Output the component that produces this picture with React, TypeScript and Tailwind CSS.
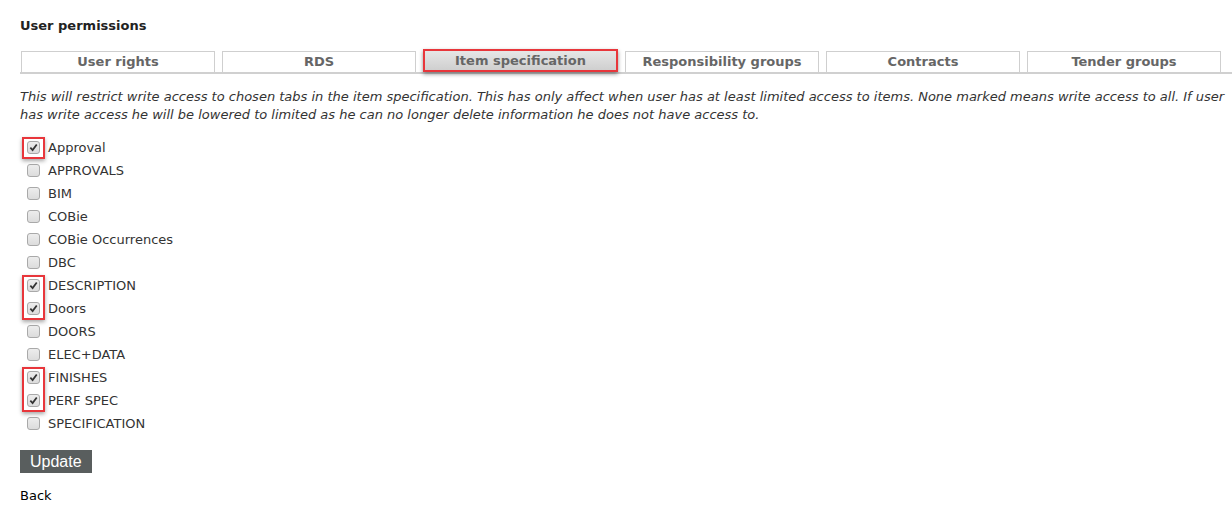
const TABS = ['User rights', 'RDS', 'Item specification', 'Responsibility groups', 'Contracts', 'Tender groups']

const ITEMS = [
  { label: 'Approval', checked: true },
  { label: 'APPROVALS', checked: false },
  { label: 'BIM', checked: false },
  { label: 'COBie', checked: false },
  { label: 'COBie Occurrences', checked: false },
  { label: 'DBC', checked: false },
  { label: 'DESCRIPTION', checked: true },
  { label: 'Doors', checked: true },
  { label: 'DOORS', checked: false },
  { label: 'ELEC+DATA', checked: false },
  { label: 'FINISHES', checked: true },
  { label: 'PERF SPEC', checked: true },
  { label: 'SPECIFICATION', checked: false },
]

// red annotation boxes laid over the checkboxes: first row, row count
const MARKS = [
  { row: 0, count: 1 },
  { row: 6, count: 2 },
  { row: 10, count: 2 },
]

const ROW = 23

function Box({ checked }: { checked: boolean }) {
  return (
    <span className="w-[13px] h-[13px] rounded-[3px] border border-[#a9a9a9] bg-gradient-to-b from-[#ededed] to-[#dcdcdc] flex items-center justify-center">
      {checked && (
        <svg width="9" height="9" viewBox="0 0 10 10">
          <path d="M1.5 5.2 L4 7.8 L8.6 1.6" fill="none" stroke="#333" strokeWidth="2" />
        </svg>
      )}
    </span>
  )
}

export default function App() {
  return (
    <div className="w-[1232px] h-[518px] overflow-hidden bg-white font-['DejaVu_Sans',Verdana,sans-serif] text-[13px] text-[#333]">
      <div className="w-[1250px] pl-5">
        <h1 className="pt-[18px] font-bold text-[13px] leading-4 text-[#222]">User permissions</h1>

        {/* tabs */}
        <div className="mt-[17px] flex gap-[7px] border-b-2 border-[#d0d0d0] pl-px">
          {TABS.map((t) =>
            t === 'Item specification' ? (
              <div
                key={t}
                className="w-[195px] h-[23px] -mt-[2px] -mb-[2px] border-2 border-[#e8363b] shadow-[0_2px_4px_rgba(0,0,0,0.45)] bg-gradient-to-b from-[#e6e6e6] to-[#cfcfcf] flex items-center justify-center pt-px font-bold text-[#666] leading-4"
              >
                {t}
              </div>
            ) : (
              <div
                key={t}
                className="w-[194px] h-[21px] border border-b-0 border-[#cfcfcf] flex items-center justify-center font-bold text-[#666] leading-4"
              >
                {t}
              </div>
            )
          )}
        </div>

        <p className="mt-[14px] italic leading-[18px] text-[#333] w-[1215px]">
          This will restrict write access to chosen tabs in the item specification. This has only affect when user has at least limited access to items. None marked means write access to all. If user has write access he will be lowered to limited as he can no longer delete information he does not have access to.
        </p>

        {/* list */}
        <div className="relative mt-[12px]">
          {ITEMS.map((it) => (
            <div key={it.label} className="h-[23px] flex items-center">
              <span className="ml-[7px]">
                <Box checked={it.checked} />
              </span>
              <span className="ml-[8px] leading-4">{it.label}</span>
            </div>
          ))}
          {MARKS.map((m) => (
            <div
              key={m.row}
              className="absolute left-[2px] w-[23px] border-2 border-[#e8363b] shadow-[0_2px_4px_rgba(0,0,0,0.35)]"
              style={{ top: m.row * ROW + 1, height: m.count * ROW - 1 }}
            />
          ))}
        </div>

        <button className="mt-[15px] h-[23px] px-[10px] bg-[#595e5e] text-white text-[16px] leading-[23px] font-['Liberation_Sans',Arial,sans-serif]">
          Update
        </button>

        <div className="mt-[15px] text-black leading-4">Back</div>
      </div>
    </div>
  )
}
